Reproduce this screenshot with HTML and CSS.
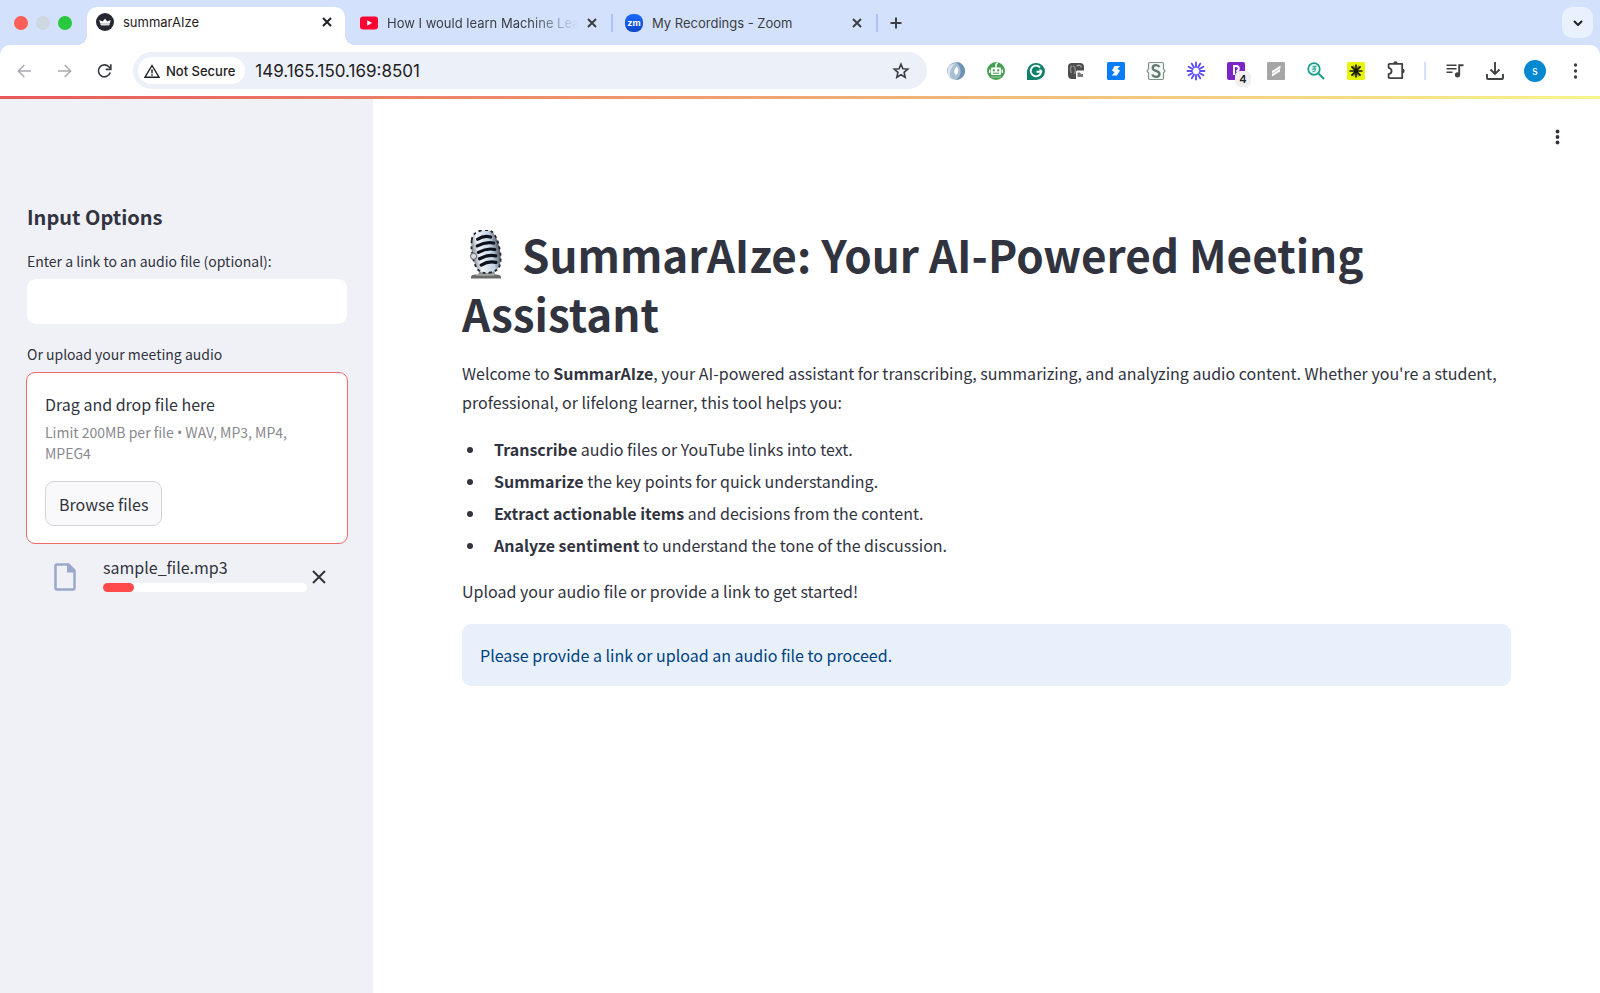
FILE: index.html
```html
<!DOCTYPE html>
<html lang="en">
<head>
  <meta charset="UTF-8" />
  <meta name="viewport" content="width=device-width, initial-scale=1.0"/>
  <title>summarAIze</title>
  <link rel="stylesheet" href="styles.css">
</head>
<body>
  <header class="browser">
    <div class="tab-strip">
      <div class="window-buttons">
        <span class="dot red"></span>
        <span class="dot gray"></span>
        <span class="dot green"></span>
      </div>

      <div class="tab active">
        <svg class="favicon" viewBox="0 0 18 18"><circle cx="9" cy="9" r="9" fill="#262730"/><path d="M3.200 7l3.400 1.500L9 5.800l2.400 2.700L14.800 7l-1.200 3.800H4.400z" fill="#fff"/><path d="M4.400 10.800h9.200v.8q0 .8-.8.8H5.200q-.8 0-.8-.8z" fill="#dcdde1"/></svg>
        <span class="tab-title">summarAIze</span>
        <button class="tab-close" aria-label="Close tab"><svg viewBox="0 0 10 10"><path d="M1 1l8 8M9 1L1 9"/></svg></button>
      </div>

      <div class="tab">
        <svg class="favicon" viewBox="0 0 18 18"><rect y="2.500" width="18" height="13" rx="3" fill="#ff0033"/><path d="M7.200 6.300v5.400L12 9z" fill="#fff"/></svg>
        <span class="tab-title fade">How I would learn Machine Learning</span>
        <button class="tab-close" aria-label="Close tab"><svg viewBox="0 0 10 10"><path d="M1 1l8 8M9 1L1 9"/></svg></button>
      </div>
      <span class="tab-divider"></span>

      <div class="tab">
        <span class="favicon zoom-logo">zm</span>
        <span class="tab-title">My Recordings - Zoom</span>
        <button class="tab-close" aria-label="Close tab"><svg viewBox="0 0 10 10"><path d="M1 1l8 8M9 1L1 9"/></svg></button>
      </div>
      <span class="tab-divider"></span>

      <button class="new-tab" aria-label="New tab"><svg viewBox="0 0 12 12"><path d="M6 0.500v11M0.500 6h11"/></svg></button>
      <button class="tab-search" aria-label="Search tabs"><svg viewBox="0 0 10 6"><path d="M1 1l4 4 4-4"/></svg></button>
    </div>

    <div class="toolbar">
      <div class="nav-buttons">
        <button class="icon-btn muted" aria-label="Back"><svg viewBox="0 0 20 20"><path d="M17 10H4.500M10.300 4l-6 6 6 6" fill="none" stroke="currentColor" stroke-width="1.500"/></svg></button>
        <button class="icon-btn muted" aria-label="Forward"><svg viewBox="0 0 20 20"><path d="M4 10H16.500M10.700 4l6 6-6 6" fill="none" stroke="currentColor" stroke-width="1.500"/></svg></button>
        <button class="icon-btn" aria-label="Reload"><svg viewBox="0 0 20 20"><path d="M16.200 11.500A6 6 0 1 1 14.900 5.800L16.500 7.600" fill="none" stroke="currentColor" stroke-width="1.700"/><path d="M16.800 3.200v5.100h-5.100" fill="none" stroke="currentColor" stroke-width="1.700"/></svg></button>
      </div>

      <div class="omnibox">
        <button class="security-chip">
          <svg viewBox="0 0 16 14"><path d="M8 1.500L15 13.200H1z" fill="none" stroke="currentColor" stroke-width="1.400"/><path d="M8 5.400v3.800M8 10.200v1.500" stroke="currentColor" stroke-width="1.500"/></svg>
          Not Secure
        </button>
        <input class="url" type="text" value="149.165.150.169:8501" aria-label="Address" />
        <button class="icon-btn" aria-label="Bookmark this tab"><svg viewBox="0 0 20 20"><path d="M10 3.200l1.900 4.600 4.900.4-3.700 3.200 1.100 4.900L10 13.700l-4.200 2.600 1.100-4.900L3.200 8.200l4.900-.4z" fill="none" stroke="currentColor" stroke-width="1.600"/></svg></button>
      </div>

      <div class="extensions">
        <button class="icon-btn" aria-label="Extension">
          <svg viewBox="0 0 20 20"><circle cx="10" cy="10" r="9" fill="#a9bfd4"/><path d="M10 1a9 9 0 0 1 7 14.600C15 18 12 19 10 19c4-3 5-6 4.500-10C14 5 12 3 10 1z" fill="#6d90b3"/><path d="M3 5C1 9 1 14 5 17.500 3 13 4 8 9 3 6 3 4 4 3 5z" fill="#d8e3ee"/><path d="M10.500 5.500q4 4-.5 9-4-4 .5-9z" fill="#fff"/></svg>
        </button>
        <button class="icon-btn" aria-label="Extension">
          <svg viewBox="0 0 20 20"><circle cx="10" cy="10" r="9" fill="#45a052"/><path d="M10 7V3.500l1.500-2" fill="none" stroke="#fff" stroke-width="1.500"/><rect x="5" y="6.500" width="10" height="7.500" rx="1" fill="#fff"/><rect x="3" y="8.500" width="1.400" height="3.500" fill="#fff"/><rect x="15.600" y="8.500" width="1.400" height="3.500" fill="#fff"/><rect x="6.800" y="8.300" width="2" height="2" fill="#45a052"/><rect x="11.200" y="8.300" width="2" height="2" fill="#45a052"/><path d="M7 12.200h6" stroke="#45a052"/><path d="M5 16h10" stroke="#a8d3ae"/></svg>
        </button>
        <button class="icon-btn" aria-label="Extension">
          <svg viewBox="0 0 20 20"><path d="M1 19V9.500A9 8.500 0 1 1 10 19z" fill="#11806a"/><path d="M14 6.500A5.300 5.300 0 1 0 15.200 10.800H10.500" fill="none" stroke="#fff" stroke-width="1.900"/><path d="M12.600 8.600h3v3.200z" fill="#fff"/></svg>
        </button>
        <button class="icon-btn" aria-label="Extension">
          <svg viewBox="0 0 20 20"><rect x="2" y="2" width="16" height="16" rx="4" fill="#4c4c4c"/><path d="M6 4.500q-3 3-.5 7.500M7 5q4 2 1.500 8" fill="none" stroke="#8c8c8c" stroke-width="1.500"/><path d="M10.500 5q4-2 5 1.500" fill="none" stroke="#a5a5a5" stroke-width="1.300"/><rect x="10" y="9.500" width="9" height="9.500" rx="1.500" fill="#fff"/><path d="M11.500 11.500h2.500l1 1.500h2v3h-5.500z" fill="#777"/></svg>
        </button>
        <button class="icon-btn" aria-label="Extension">
          <svg viewBox="0 0 20 20"><rect x="1" y="1" width="18" height="18" rx="1.500" fill="#0a7cf5"/><path d="M8.500 5h5.500l-2.500 3 2.500 1.500-3 5H5.800l2.800-3.300L6 9.500z" fill="#fff"/></svg>
        </button>
        <button class="icon-btn" aria-label="Extension">
          <svg viewBox="0 0 20 20"><path d="M4 1.500h12a1.500 1.500 0 0 1 1.500 1.500v5L19 10l-1.500 2v5a1.500 1.500 0 0 1-1.500 1.500H4A1.500 1.500 0 0 1 2.500 17v-5L1 10l1.500-2V3A1.500 1.500 0 0 1 4 1.500z" fill="#f4f7f5" stroke="#7b9287" stroke-width="1.200"/><path d="M13.400 6C12.800 4.600 11.600 4.200 10 4.200c-2 0-3.300 1-3.300 2.700 0 3.600 6.800 2.300 6.800 6 0 1.800-1.400 2.900-3.500 2.900-1.900 0-3.200-.7-3.700-2.300" fill="none" stroke="#5f7a6c" stroke-width="2.300"/></svg>
        </button>
        <button class="icon-btn" aria-label="Extension">
          <svg viewBox="0 0 20 20"><g stroke="#5b4bff" stroke-width="1.900" stroke-linecap="round"><path d="M10 1.500V6M10 14v4.500M1.500 10H6M14 10h4.500M5.750 2.640L8 6.540M12 13.460l2.250 3.900M2.640 5.750L6.540 8M13.460 12l3.900 2.250M2.640 14.250L6.540 12M13.460 8l3.900-2.250M5.750 17.360L8 13.460M12 6.540l2.250-3.900"/></g></svg>
        </button>
        <button class="icon-btn badge-host" aria-label="Extension, 4 alerts">
          <svg viewBox="0 0 20 20"><rect x="1" y="1" width="18" height="18" rx="2" fill="#7d24c4"/><path d="M8 14V5h2.300a2.500 2.500 0 0 1 0 5" fill="none" stroke="#fff" stroke-width="2"/></svg>
          <span class="badge">4</span>
        </button>
        <button class="icon-btn" aria-label="Extension">
          <svg viewBox="0 0 20 20"><rect x="1" y="1" width="18" height="18" rx="1" fill="#a6a6a6"/><path d="M6 10l8.500-5.500v2.800L6 12.300zM6 15.500l8-5V8l-8 5z" fill="#fff"/></svg>
        </button>
        <button class="icon-btn" aria-label="Extension">
          <svg viewBox="0 0 20 20"><circle cx="8" cy="8" r="5.800" fill="#e5f6f3" stroke="#1a9c8b" stroke-width="1.700"/><path d="M12.500 12.500l5.500 5.500" stroke="#1a9c8b" stroke-width="2"/><path d="M6.500 5.500h3.200L7 8h2.500q0 3-3 2.500" fill="none" stroke="#48b3a5" stroke-width="1.300"/></svg>
        </button>
        <button class="icon-btn" aria-label="Extension">
          <svg viewBox="0 0 20 20"><rect x="1" y="1" width="18" height="18" rx="1.500" fill="#e6f50a"/><path d="M10 3.500v13M3.500 10h13M5.400 5.400l9.200 9.200M14.600 5.400l-9.200 9.200" stroke="#14140a" stroke-width="1.600"/><path d="M7.500 4.500l5 11M12.500 4.500l-5 11" stroke="#14140a" stroke-width=".6"/></svg>
        </button>
        <button class="icon-btn" aria-label="Extensions">
          <svg viewBox="0 0 20 20"><path d="M3.500 2.800H16.200V17.200H3.500Q2.600 17.200 2.600 16.300V13.200Q5.600 12.600 5.600 10T2.600 6.800V3.700Q2.600 2.800 3.500 2.800z" fill="none" stroke="currentColor" stroke-width="1.800" stroke-linejoin="round"/><path d="M7.300 2.500a2.200 2.200 0 0 1 4.400 0zM16.500 7.800a2.200 2.200 0 0 1 0 4.400z" fill="currentColor"/></svg>
        </button>
        <span class="toolbar-divider"></span>
        <button class="icon-btn" aria-label="Media controls">
          <svg viewBox="0 0 20 20"><path d="M1.500 4.200h10M1.500 7.700h10M1.500 11.200h6" stroke="currentColor" stroke-width="1.600"/><path d="M14.200 14V4.200h4.300" fill="none" stroke="currentColor" stroke-width="1.900"/><circle cx="12.500" cy="13.800" r="2.600" fill="currentColor"/></svg>
        </button>
        <button class="icon-btn" aria-label="Downloads">
          <svg viewBox="0 0 20 20"><path d="M10 1v12M5.500 8.500L10 13l4.500-4.500M2 13v4q0 1 1 1h14q1 0 1-1v-4" fill="none" stroke="currentColor" stroke-width="1.900"/></svg>
        </button>
        <button class="avatar" aria-label="Profile">s</button>
        <button class="icon-btn" aria-label="Browser menu">
          <svg viewBox="0 0 20 20"><g fill="currentColor"><circle cx="10.500" cy="4" r="1.700"/><circle cx="10.500" cy="10" r="1.700"/><circle cx="10.500" cy="16" r="1.700"/></g></svg>
        </button>
      </div>
    </div>
  </header>

  <div class="accent-bar"></div>

  <div class="app">
    <aside class="sidebar">
      <h2>Input Options</h2>

      <label for="audioLink">Enter a link to an audio file (optional):</label>
      <input type="text" id="audioLink" class="text-input" />

      <label for="audioFile">Or upload your meeting audio</label>
      <div class="dropzone">
        <p class="drop-title">Drag and drop file here</p>
        <p class="drop-limit">Limit 200MB per file <span class="bullet">•</span> WAV, MP3, MP4, MPEG4</p>
        <button class="browse-btn" id="audioFile">Browse files</button>
      </div>

      <div class="file-row">
        <svg class="file-icon" viewBox="0 0 22 28"><path d="M3 1.500h11.500l6 6V25q0 1.500-1.500 1.500H3Q1.500 26.500 1.500 25V3Q1.500 1.500 3 1.500z" fill="none" stroke="#9ba8cb" stroke-width="2.500"/><path d="M13 1v8.500h8.500z" fill="#9ba8cb"/></svg>
        <div class="file-info">
          <span class="file-name" id="fileName">sample_file.mp3</span>
          <progress class="file-progress" max="100" value="15" aria-labelledby="fileName"></progress>
        </div>
        <button class="remove-btn" aria-label="Remove file"><svg viewBox="0 0 14 14"><path d="M1 1l12 12M13 1L1 13"/></svg></button>
      </div>
    </aside>

    <main class="main">
      <div class="app-header">
        <button class="icon-btn" aria-label="Main menu">
          <svg viewBox="0 0 20 20"><g fill="currentColor"><circle cx="9.500" cy="4.500" r="1.900"/><circle cx="9.500" cy="10" r="1.900"/><circle cx="9.500" cy="15.500" r="1.900"/></g></svg>
        </button>
      </div>

      <h1>
        <svg class="mic" role="img" aria-label="Microphone" viewBox="0 0 50 50">
          <defs>
            <linearGradient id="steel" x1="0" x2="1" y1="0" y2="0">
              <stop offset="0" stop-color="#7b858f"/>
              <stop offset="0.250" stop-color="#f1f5fa"/>
              <stop offset="0.700" stop-color="#c3d2e4"/>
              <stop offset="1" stop-color="#4b525b"/>
            </linearGradient>
          </defs>
          <path d="M9 47q0-2.500 5-2.500h20q5 0 5 2.500v1.500H9z" fill="#6a6a68"/>
          <path d="M14 45h18" stroke="#c4c4c0"/>
          <path d="M18 40h14l1 4.500H16z" fill="#8d9090"/>
          <g transform="rotate(-10 24 22)">
            <path d="M12 8Q14 0 24 0t12 8q2 6 2 15t-3 15q-3 5-11 5t-11-5q-3-6-3-15t2-15z" fill="url(#steel)"/>
            <path d="M12 8Q14 0 24 0t12 8q2 6 2 15t-3 15q-3 5-11 5t-11-5q-3-6-3-15t2-15z" fill="none" stroke="#23272e" stroke-width="1.800" stroke-dasharray="3 3"/>
            <g fill="none" stroke="#0c111b" stroke-width="3.200" stroke-linecap="round">
              <path d="M18 8q7-3 13 0M16.500 14.500q9-3 16.500 0M16.500 21q9-3 16.500 0M16.500 27.500q9-3 16.500 0M17 34q8-3 15 0"/>
            </g>
            <circle cx="11" cy="24" r="3" fill="#d7dce1" stroke="#6b727a"/>
          </g>
        </svg>
        SummarAIze: Your AI-Powered Meeting Assistant
      </h1>

      <p>Welcome to <strong>SummarAIze</strong>, your AI-powered assistant for transcribing, summarizing, and analyzing audio content. Whether you're a student, professional, or lifelong learner, this tool helps you:</p>

      <ul class="features">
        <li><strong>Transcribe</strong> audio files or YouTube links into text.</li>
        <li><strong>Summarize</strong> the key points for quick understanding.</li>
        <li><strong>Extract actionable items</strong> and decisions from the content.</li>
        <li><strong>Analyze sentiment</strong> to understand the tone of the discussion.</li>
      </ul>

      <p>Upload your audio file or provide a link to get started!</p>

      <div class="alert">Please provide a link or upload an audio file to proceed.</div>
    </main>
  </div>
</body>
</html>
```
FILE: styles.css
```css
* {
  margin: 0;
  padding: 0;
  box-sizing: border-box;
}

body {
  min-height: 100vh;
  display: flex;
  flex-direction: column;
  background: #fff;
  color: #31333f;
  font-family: 'Noto Sans CJK SC', 'Open Sans', sans-serif;
  font-size: 16px;
  line-height: 28px;
}

button,
input {
  font: inherit;
  color: inherit;
  border: none;
  background: none;
}

button {
  cursor: pointer;
}

svg {
  display: block;
}

/* Browser chrome */
.browser {
  background: #d3e1fc;
  color: #3c3e42;
  font-family: Inter, 'Liberation Sans', sans-serif;
  font-size: 13px;
  line-height: 20px;
}

.tab-strip {
  display: flex;
  align-items: center;
  height: 45px;
  padding: 0 7px 0 14px;
}

.window-buttons {
  display: flex;
  gap: 8px;
  width: 73px;
}

.dot {
  width: 14px;
  height: 14px;
  border-radius: 50%;
}

.red {
  background: #ff5f57;
}

.gray {
  background: #ced6df;
}

.green {
  background: #28c840;
}

.tab {
  position: relative;
  display: flex;
  align-items: center;
  gap: 9px;
  width: 260px;
  padding: 0 14px 0 9px;
}

.tab.active {
  align-self: flex-end;
  width: 258px;
  height: 38px;
  margin-right: 6px;
  padding-right: 13px;
  padding-bottom: 8px;
  background: #fff;
  border-radius: 10px 10px 0 0;
  color: #1f2023;
}

.tab.active::before,
.tab.active::after {
  content: "";
  position: absolute;
  bottom: 0;
  width: 10px;
  height: 10px;
}

.tab.active::before {
  left: -10px;
  background: radial-gradient(circle at 0 0, transparent 10px, #fff 10px);
}

.tab.active::after {
  right: -10px;
  background: radial-gradient(circle at 100% 0, transparent 10px, #fff 10px);
}

.favicon {
  flex: none;
  width: 18px;
  height: 18px;
}

.zoom-logo {
  border-radius: 8px;
  background: linear-gradient(#1a6bff, #0a45c8);
  color: #fff;
  font-size: 9px;
  font-weight: 700;
  line-height: 17px;
  text-align: center;
}

.tab-title {
  flex: 1;
  overflow: hidden;
  white-space: nowrap;
}

.fade {
  mask-image: linear-gradient(90deg, #000 75%, transparent);
}

.tab-close svg {
  width: 10px;
  height: 10px;
}

.tab-close svg,
.new-tab svg,
.tab-search svg {
  fill: none;
  stroke: currentColor;
  stroke-width: 2;
}

.tab-divider {
  width: 2px;
  height: 18px;
  margin-right: 3px;
  background: #a8c3f5;
}

.new-tab {
  margin-left: 9px;
}

.new-tab svg {
  width: 12px;
  height: 12px;
}

.tab-search {
  display: grid;
  place-items: center;
  width: 31px;
  height: 31px;
  margin-left: auto;
  border-radius: 10px;
  background: #eaf1fe;
  color: #1f2023;
}

.tab-search svg {
  width: 10px;
  height: 6px;
}

.toolbar {
  display: flex;
  align-items: center;
  gap: 19px;
  height: 51px;
  padding: 0 15px 0 14px;
  background: #fff;
  border-radius: 10px 10px 0 0;
}

.nav-buttons,
.extensions {
  display: flex;
  align-items: center;
  gap: 20px;
}

.extensions {
  color: #3f4145;
}

.icon-btn {
  flex: none;
  width: 20px;
  height: 20px;
}

.muted {
  color: #a9abae;
}

.omnibox {
  flex: 1;
  display: flex;
  align-items: center;
  height: 37px;
  padding: 0 16px 0 5px;
  border-radius: 19px;
  background: #ebf0f9;
}

.security-chip {
  display: flex;
  align-items: center;
  gap: 6px;
  height: 27px;
  padding: 0 10px 0 6px;
  border-radius: 14px;
  background: #fff;
  color: #1f2023;
  font-weight: 500;
  white-space: nowrap;
}

.security-chip svg {
  width: 16px;
  height: 14px;
}

.url {
  flex: 1;
  min-width: 0;
  padding-left: 10px;
  outline: none;
  color: #1f2023;
  font-size: 17px;
}

.badge-host {
  position: relative;
}

.badge {
  position: absolute;
  left: 9px;
  top: 10px;
  width: 16px;
  height: 16px;
  border-radius: 5px;
  background: #f0f0f2;
  color: #1f2023;
  font-size: 11px;
  font-weight: 600;
  line-height: 16px;
}

.toolbar-divider {
  width: 2px;
  height: 18px;
  margin: 0 -1px 0 -2px;
  background: #d3e1fc;
}

.avatar {
  width: 22px;
  height: 22px;
  margin: 0 -1px;
  border-radius: 50%;
  background: #0288d1;
  color: #fff;
  font-size: 11px;
}

/* App */
.accent-bar {
  height: 3px;
  background: linear-gradient(90deg, #e8575a, #f0a070 45%, #f6f58c);
}

.app {
  flex: 1;
  display: flex;
}

.sidebar {
  flex: none;
  width: 373px;
  padding: 104px 26px 0 27px;
  background: #f0f1f6;
}

.sidebar h2 {
  margin-bottom: 19px;
  font-size: 20px;
  font-weight: 600;
  line-height: 28px;
}

.sidebar label {
  display: block;
  margin-bottom: 7px;
  font-size: 14px;
  line-height: 22px;
}

.text-input {
  display: block;
  width: 100%;
  height: 45px;
  margin-bottom: 19px;
  padding: 0 14px;
  border-radius: 9px;
  background: #fff;
}

.dropzone {
  margin: 0 -1px;
  padding: 17px 18px;
  border: 1px solid #f0686c;
  border-radius: 9px;
  background: #fff;
}

.drop-limit {
  margin: 4px 0 18px;
  color: #888990;
  font-size: 14px;
  line-height: 20px;
}

.bullet {
  font-family: 'Open Sans', sans-serif;
}

.browse-btn {
  height: 45px;
  padding: 0 13px;
  border: 1px solid #d3d4d9;
  border-radius: 9px;
  background: #f9f9fb;
}

.file-row {
  display: flex;
  align-items: center;
  gap: 27px;
  padding: 17px 21px 0 27px;
}

.file-icon {
  width: 22px;
  height: 28px;
}

.file-info {
  flex: 1;
  margin-top: -8px;
}

.file-name {
  display: block;
  margin-bottom: 2px;
  line-height: 28px;
}

.file-progress {
  display: block;
  appearance: none;
  width: 100%;
  height: 9px;
}

.file-progress::-webkit-progress-bar {
  border-radius: 5px;
  background: #fff;
}

.file-progress::-webkit-progress-value {
  border-radius: 5px;
  background: #ff4b4b;
}

.remove-btn {
  margin-left: -22px;
}

.remove-btn svg {
  width: 14px;
  height: 14px;
  fill: none;
  stroke: #31333f;
  stroke-width: 2;
}

.main {
  flex: 1;
  padding: 0 89px;
}

.app-header {
  display: flex;
  justify-content: flex-end;
  margin: 28px -57px 78px 0;
}

h1 {
  margin-bottom: 16px;
  font-size: 44px;
  font-weight: 700;
  line-height: 59px;
}

.mic {
  display: inline-block;
  width: 50px;
  height: 50px;
  vertical-align: -7px;
}

.main p {
  margin-bottom: 18px;
  line-height: 29px;
}

.main strong {
  font-weight: 600;
}

.features {
  margin-bottom: 18px;
  padding-left: 24px;
}

.features li {
  margin-bottom: 4px;
  padding-left: 8px;
}

.alert {
  padding: 17px 18px;
  border-radius: 9px;
  background: #e8f0fc;
  color: #004280;
}
```
